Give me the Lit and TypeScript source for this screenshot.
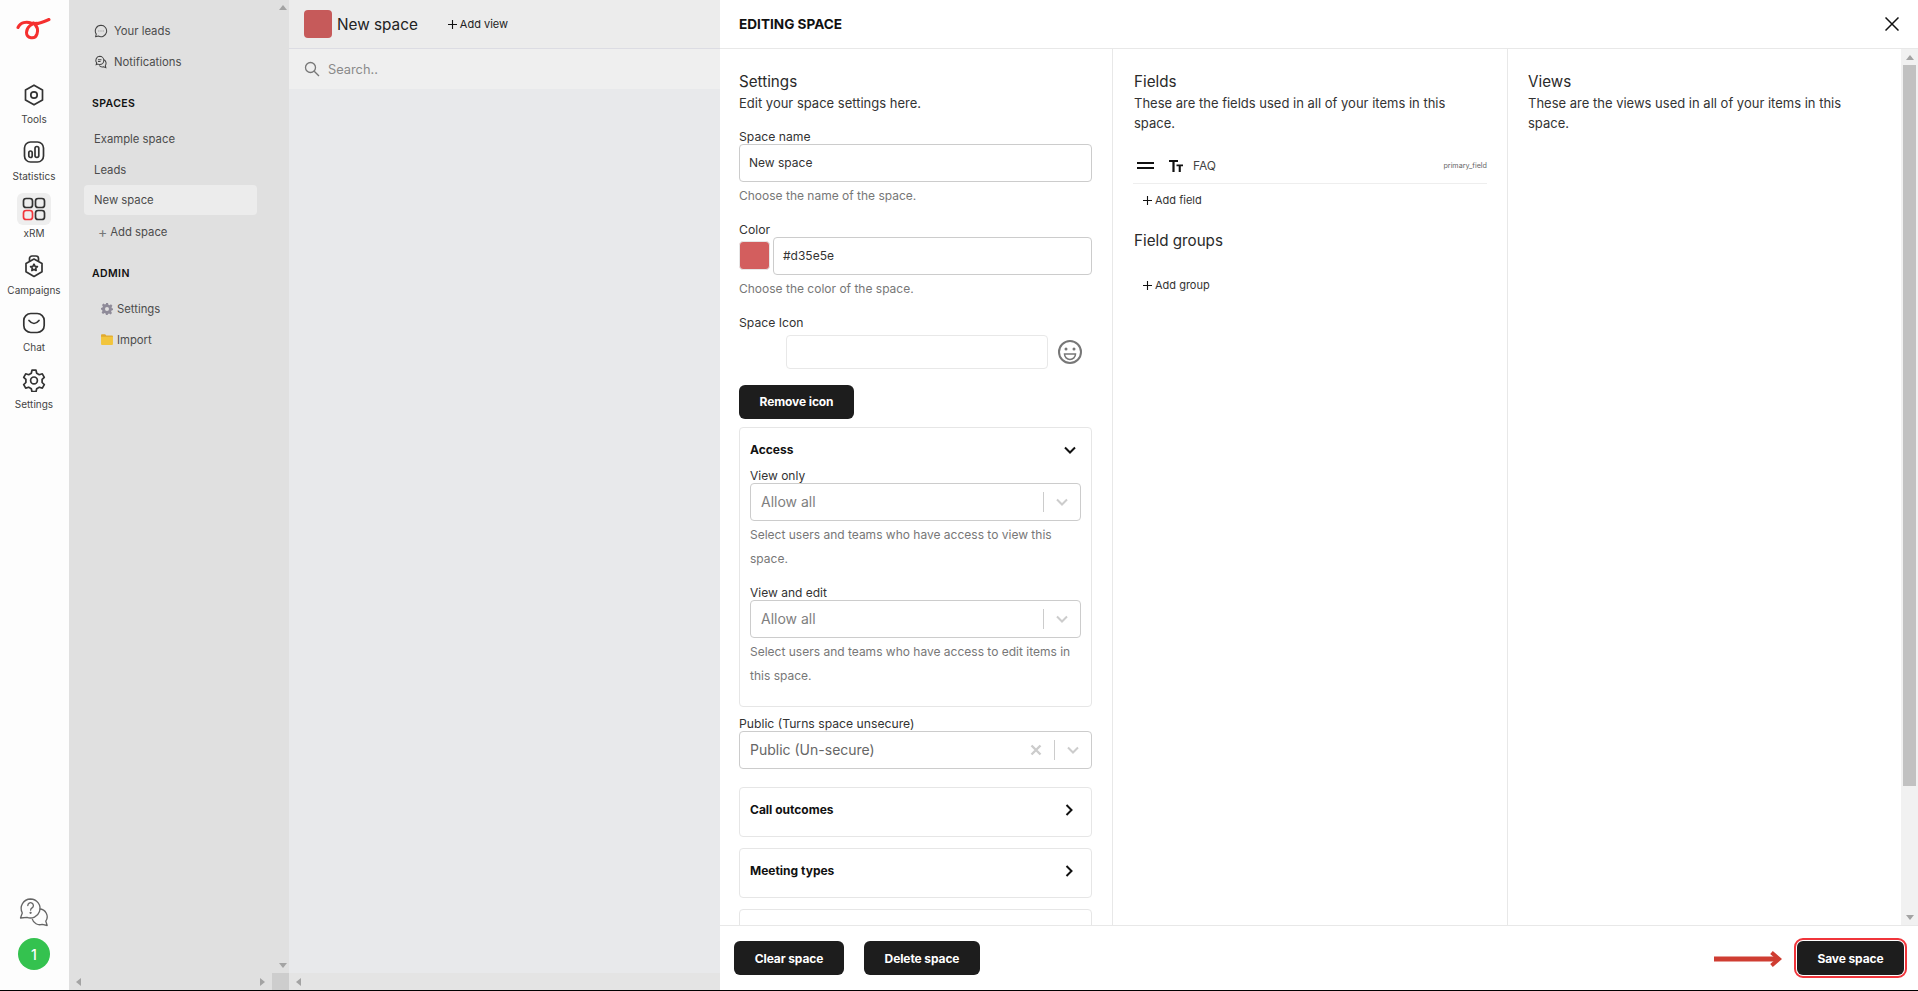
import {css, html, LitElement, svg} from 'lit'
import {customElement} from 'lit/decorators.js'

const chevronDown = html`<svg width="16" height="16" viewBox="0 0 16 16" fill="none" stroke="currentColor" stroke-width="2"><path d="M3 5.500l5 5 5-5"/></svg>`
const chevronRight = html`<svg width="16" height="16" viewBox="0 0 16 16" fill="none" stroke="#111" stroke-width="2"><path d="M5.500 3l5 5-5 5"/></svg>`
const plus = html`<svg class="plus-icon" width="9" height="9" viewBox="0 0 9 9" stroke="#111" stroke-width="1.100"><path d="M4.500 0v9M0 4.500h9"/></svg>`

const railIcons: Record<string, unknown> = {
    tools: svg`<path d="M12 2.200l8.500 4.900v9.800L12 21.800l-8.500-4.900V7.100z" stroke-linejoin="round"/><circle cx="12" cy="12" r="3.200"/>`,
    stats: svg`<rect x="2.500" y="2" width="19" height="20" rx="6"/><rect x="6.800" y="11" width="3.400" height="6.500" rx="1.700"/><rect x="13" y="6.500" width="3.800" height="11" rx="1.900"/>`,
    xrm: svg`<rect x="1.500" y="1.500" width="9" height="9" rx="2.600"/><rect x="13.500" y="1.500" width="9" height="9" rx="2.600"/><rect x="1.500" y="13.500" width="9" height="9" rx="2.600" stroke="#f0353b"/><rect x="13.500" y="13.500" width="9" height="9" rx="2.600"/>`,
    campaigns: svg`<path d="M12 5l8 4.400v8.400L12 22.400l-8-4.600V9.400z" stroke-linejoin="round"/><path d="M7.500 7V4.500a2.500 2.500 0 0 1 2.500-2.500h4a2.500 2.500 0 0 1 2.500 2.500V7"/><path d="M12 10.200l1.100 2.100 2.300.3-1.700 1.600.4 2.300-2.100-1.100-2.100 1.100.4-2.300-1.700-1.600 2.300-.3z" stroke-linejoin="round"/>`,
    chat: svg`<rect x="1.800" y="2.500" width="20.400" height="19" rx="7"/><path d="M7 9.500Q12 15.500 17 9.500" stroke-linecap="round"/>`,
    settings: svg`<path d="M10 2.200h4l.7 3 2.600 1.500 3-.9 2 3.500-2.200 2.100v3.100l2.200 2.100-2 3.500-3-.9-2.600 1.500-.7 3h-4l-.7-3-2.600-1.500-3 .9-2-3.500 2.200-2.100v-3.100L1.700 9.300l2-3.500 3 .9 2.600-1.500z" stroke-linejoin="round"/><circle cx="12" cy="12.400" r="3.400"/>`,
}

const railItems = [
    {key: 'tools', label: 'Tools'},
    {key: 'stats', label: 'Statistics'},
    {key: 'xrm', label: 'xRM', active: true},
    {key: 'campaigns', label: 'Campaigns'},
    {key: 'chat', label: 'Chat'},
    {key: 'settings', label: 'Settings'},
]

@customElement('app-root')
export class AppRoot extends LitElement {

    private select(value: string) {
        return html`
            <div class="select">
                <span class="select-value">${value}</span>
                <span class="select-sep"></span>
                <span class="select-arrow">${chevronDown}</span>
            </div>`
    }

    private renderRail() {
        return html`
            <nav class="rail">
                <div class="logo">
                    <svg width="36" height="26" viewBox="0 0 36 26" fill="none" stroke="#f5302f" stroke-width="3" stroke-linecap="round">
                        <path d="M2 10.500C4.500 5.500 10 4.500 15 6c6 1.500 11-.5 18-3.500"/>
                        <path d="M22 6.500C16 5.500 10.500 10 10.500 15.500c0 6 8.500 7.500 10.500 1.500 1.500-4.500-.5-8.500-3.500-11"/>
                    </svg>
                </div>
                ${railItems.map(item => html`
                    <div class="rail-item">
                        <span class="rail-icon ${item.active ? 'active' : ''}">
                            <svg width="24" height="24" viewBox="0 0 24 24" fill="none" stroke="#333" stroke-width="1.700">${railIcons[item.key]}</svg>
                        </span>
                        <span class="rail-label">${item.label}</span>
                    </div>`)}
                <div class="rail-spacer"></div>
                <svg class="help" width="30" height="30" viewBox="0 0 30 30" fill="none" stroke="#666" stroke-width="1.300">
                    <path d="M11.500 2a9.500 9.500 0 0 1 9 12.500 9.500 9.500 0 0 1-12.500 5.800L1.500 21l1.800-5A9.500 9.500 0 0 1 11.500 2z" stroke-linejoin="round"/>
                    <path d="M20.500 12a7.800 7.800 0 0 1 6.300 12.200l1.400 4.300-5-1.200a7.800 7.800 0 0 1-10-5.400" stroke-linejoin="round"/>
                    <path d="M8.800 8.500a2.800 2.800 0 1 1 4.300 2.400c-1 .7-1.500 1.200-1.500 2.300" stroke-linecap="round"/>
                    <circle cx="11.600" cy="15.800" r=".5"/>
                </svg>
                <div class="avatar">1</div>
            </nav>`
    }

    private renderSidebar() {
        return html`
            <aside class="sidebar">
                <div class="sidebar-inner">
                    <div class="side-scroll">
                        <div class="side-item">
                            <svg width="14" height="14" viewBox="0 0 16 16" fill="none" stroke="#444" stroke-width="1.200">
                                <path d="M8 1.500a6.500 6.500 0 1 1-3 12.300l-3.200.8.800-3A6.500 6.500 0 0 1 8 1.500z" stroke-linejoin="round"/>
                                <path d="M5.300 8h.6M7.700 8h.6M10.100 8h.6"/>
                            </svg>
                            Your leads
                        </div>
                        <div class="side-item">
                            <svg width="14" height="14" viewBox="0 0 16 16" fill="none" stroke="#444" stroke-width="1.200">
                                <path d="M6.500 1.500a4.700 4.700 0 0 1 0 9.400c-.7 0-1.400-.2-2-.5l-2 .6.500-2a4.700 4.700 0 0 1 3.500-7.500z"/>
                                <path d="M11.500 5.500a4.500 4.500 0 0 1 1.500 6.500l.5 2.500-2.500-1a4.500 4.500 0 0 1-5-1.500"/>
                                <path d="M4.500 5.500h4M4.500 7.500h3"/>
                            </svg>
                            Notifications
                        </div>
                        <div class="side-heading first">SPACES</div>
                        <div class="side-item plain">Example space</div>
                        <div class="side-item plain">Leads</div>
                        <div class="side-item plain active">New space</div>
                        <div class="side-item plain add"><span class="plus">+</span> Add space</div>
                        <div class="side-heading">ADMIN</div>
                        <div class="side-item admin">
                            <svg width="12" height="12" viewBox="0 0 24 24" fill="#8f8b99">
                                <path fill-rule="evenodd" d="M10 0h4l.8 3.400 2.200.9 3-1.800 2.800 2.800-1.800 3 .9 2.200L24.500 11v3l-3.400.8-.9 2.200 1.800 3-2.800 2.800-3-1.800-2.200.9L13 24.500h-3l-.8-3.400-2.200-.9-3 1.800-2.800-2.800 1.800-3-.9-2.200L-.5 13v-3l3.400-.8.9-2.200-1.800-3L4.800 1.200l3 1.800 2.200-.9zM12 8a4 4 0 1 0 0 8 4 4 0 0 0 0-8z"/>
                            </svg>
                            Settings
                        </div>
                        <div class="side-item admin">
                            <svg width="12" height="11" viewBox="0 0 13 12">
                                <path d="M0 1.500C0 .7.500.3 1.200.3h3.300l1.200 1.300H12c.6 0 1 .4 1 1v1H0z" fill="#e0a92e"/>
                                <path d="M0 3h13v8c0 .6-.4 1-1 1H1c-.6 0-1-.4-1-1z" fill="#f2c53d"/>
                            </svg>
                            Import
                        </div>
                    </div>
                    <div class="vbar">
                        <span class="arrow up"></span>
                        <span class="grow"></span>
                        <span class="arrow down"></span>
                    </div>
                </div>
                <div class="hbar">
                    <span class="arrow left"></span>
                    <span class="grow"></span>
                    <span class="arrow right"></span>
                    <span class="corner"></span>
                </div>
            </aside>`
    }

    private renderMain() {
        return html`
            <main class="main">
                <div class="topbar">
                    <span class="space-swatch"></span>
                    <span class="space-name">New space</span>
                    <span class="add-view">${plus} Add view</span>
                </div>
                <div class="searchbar">
                    <svg width="16" height="16" viewBox="0 0 16 16" fill="none" stroke="#777" stroke-width="1.300">
                        <circle cx="6.500" cy="6.500" r="5"/><path d="M10.200 10.200L15 15"/>
                    </svg>
                    <span>Search..</span>
                </div>
                <div class="grow"></div>
                <div class="hbar main-hbar"><span class="arrow left"></span></div>
            </main>`
    }

    private renderSettings() {
        return html`
            <section class="col col-settings">
                <h2>Settings</h2>
                <p class="sub">Edit your space settings here.</p>
                <div class="label name-label">Space name</div>
                <div class="input">New space</div>
                <div class="help-text">Choose the name of the space.</div>

                <div class="label spaced">Color</div>
                <div class="color-row">
                    <span class="color-swatch"></span>
                    <div class="input grow">#d35e5e</div>
                </div>
                <div class="help-text">Choose the color of the space.</div>

                <div class="label spaced icon-label">Space Icon</div>
                <div class="icon-row">
                    <div class="icon-input"></div>
                    <svg width="26" height="26" viewBox="0 0 26 26" fill="none" stroke="#777" stroke-width="2">
                        <circle cx="13" cy="13" r="11"/>
                        <circle cx="9" cy="10" r="1.500" fill="#777" stroke="none"/>
                        <circle cx="17" cy="10" r="1.500" fill="#777" stroke="none"/>
                        <path d="M7.500 15h11a5.500 5.500 0 0 1-11 0z" stroke-width="1.500"/>
                    </svg>
                </div>
                <button class="btn remove">Remove icon</button>

                <div class="card access">
                    <div class="card-head"><span>Access</span><span class="chev">${chevronDown}</span></div>
                    <div class="label first">View only</div>
                    ${this.select('Allow all')}
                    <div class="help-text tall">Select users and teams who have access to view this space.</div>
                    <div class="label second">View and edit</div>
                    ${this.select('Allow all')}
                    <div class="help-text tall">Select users and teams who have access to edit items in this space.</div>
                </div>

                <div class="label public">Public (Turns space unsecure)</div>
                <div class="select public-select">
                    <span class="select-value dark">Public (Un-secure)</span>
                    <svg class="clear" width="12" height="12" viewBox="0 0 12 12" stroke="#ccc" stroke-width="2.400"><path d="M1.500 1.500l9 9M10.500 1.500l-9 9"/></svg>
                    <span class="select-sep"></span>
                    <span class="select-arrow">${chevronDown}</span>
                </div>

                <div class="card closed outcomes"><span>Call outcomes</span>${chevronRight}</div>
                <div class="card closed"><span>Meeting types</span>${chevronRight}</div>
                <div class="card closed"></div>
            </section>`
    }

    private renderFields() {
        return html`
            <section class="col col-fields">
                <h2>Fields</h2>
                <p class="sub">These are the fields used in all of your items in this space.</p>
                <div class="field-row">
                    <svg class="drag" width="17" height="8" viewBox="0 0 17 8" fill="#111"><rect width="17" height="2"/><rect y="5" width="17" height="2"/></svg>
                    <svg class="tt" width="14" height="12" viewBox="0 0 14 12" fill="#111"><path d="M0 0h9v2H5.600v10H3.400V2H0z"/><path d="M7.500 4.500H14v1.700h-2.200V12H9.700V6.200H7.500z"/></svg>
                    <span class="field-name">FAQ</span>
                    <span class="field-key">primary_field</span>
                </div>
                <div class="add-link">${plus} Add field</div>
                <h2 class="groups">Field groups</h2>
                <div class="add-link add-group">${plus} Add group</div>
            </section>`
    }

    render() {
        return html`
            <div class="page">
                ${this.renderRail()}
                ${this.renderSidebar()}
                ${this.renderMain()}
                <div class="panel">
                    <header class="panel-head">
                        <span class="panel-title">EDITING SPACE</span>
                        <svg width="14" height="14" viewBox="0 0 14 14" stroke="#111" stroke-width="1.500"><path d="M.5.500l13 13M13.500.500l-13 13"/></svg>
                    </header>
                    <div class="panel-body">
                        ${this.renderSettings()}
                        ${this.renderFields()}
                        <section class="col col-views">
                            <h2>Views</h2>
                            <p class="sub">These are the views used in all of your items in this space.</p>
                        </section>
                        <div class="vbar panel-vbar">
                            <span class="arrow up"></span>
                            <span class="thumb"></span>
                            <span class="grow"></span>
                            <span class="arrow down"></span>
                        </div>
                    </div>
                    <footer class="panel-foot">
                        <button class="btn clear-btn">Clear space</button>
                        <button class="btn delete-btn">Delete space</button>
                        <span class="grow"></span>
                        <svg class="red-arrow" width="68" height="16" viewBox="0 0 68 16" fill="none" stroke="#cf3d32">
                            <path d="M0 8h63" stroke-width="5"/><path d="M57.500 1.500L65 8l-7.500 6.500" stroke-width="4"/>
                        </svg>
                        <button class="btn save">Save space</button>
                    </footer>
                </div>
            </div>
        `
    }

    static styles = css`
      :host {
        display: block;
        font-family: Inter, 'Noto Sans', sans-serif;
        color: #333;
      }

      * {
        box-sizing: border-box;
      }

      .page {
        display: flex;
        width: 1918px;
        height: 991px;
        border-bottom: 1px solid #000;
        overflow: hidden;
      }

      .grow {
        flex: 1;
      }

      /* icon rail */
      .rail {
        width: 69px;
        flex: none;
        background: #fdfdfd;
        display: flex;
        flex-direction: column;
        align-items: center;
        padding-right: 1px;
      }

      .logo {
        height: 66px;
        padding-top: 17px;
      }

      .rail-item {
        height: 57px;
        flex: none;
        display: flex;
        flex-direction: column;
        align-items: center;
        padding-top: 16.500px;
      }

      .rail-icon {
        width: 34px;
        height: 32px;
        flex: none;
        margin-top: -4px;
        display: flex;
        align-items: center;
        justify-content: center;
        border-radius: 6px;
      }

      .rail-icon.active {
        background: #eeeeee;
      }

      .rail-label {
        font-size: 10px;
        line-height: 13px;
        flex: none;
        margin-top: 2px;
        color: #444;
      }

      .rail-spacer {
        flex: 1;
      }

      .help {
        margin-bottom: 11px;
      }

      .avatar {
        width: 32px;
        height: 32px;
        border-radius: 50%;
        background: #34c24f;
        color: #fff;
        font-size: 14px;
        font-weight: 500;
        display: flex;
        align-items: center;
        justify-content: center;
        margin-bottom: 20px;
      }

      /* sidebar */
      .sidebar {
        width: 220px;
        flex: none;
        background: #e0e0e0;
        display: flex;
        flex-direction: column;
      }

      .sidebar-inner {
        flex: 1;
        display: flex;
        min-height: 0;
      }

      .side-scroll {
        flex: 1;
        padding: 15px 20px 0 15px;
      }

      .side-item {
        height: 31px;
        display: flex;
        align-items: center;
        gap: 6px;
        padding-left: 10px;
        font-size: 11.300px;
        color: #4c4c4c;
        border-radius: 4px;
      }

      .side-item.active {
        background: #ececec;
        height: 30px;
        margin-bottom: 1px;
      }

      .side-item.add {
        padding-left: 14px;
        gap: 3px;
      }

      .side-item.admin {
        padding-left: 17px;
        gap: 4px;
      }

      .plus {
        color: #777;
        font-size: 14px;
        line-height: 14px;
      }

      .side-heading {
        font-size: 10.500px;
        font-weight: 600;
        letter-spacing: .4px;
        color: #111;
        height: 31px;
        padding: 0 0 0 8px;
        margin-top: 11px;
        display: flex;
        align-items: center;
      }

      .side-heading.first {
        margin-bottom: 4px;
      }

      .side-heading + .side-item.admin {
        margin-top: 4px;
      }

      /* scrollbars */
      .vbar {
        width: 12px;
        flex: none;
        display: flex;
        flex-direction: column;
        align-items: center;
        padding: 5px 0;
      }

      .hbar {
        height: 17px;
        flex: none;
        display: flex;
        align-items: center;
        padding-left: 7px;
      }

      .hbar .arrow.right {
        margin-right: 7px;
      }

      .corner {
        width: 17px;
        height: 17px;
        background: #cdcdcd;
      }

      .arrow {
        width: 0;
        height: 0;
        border: 4px solid transparent;
        flex: none;
      }

      .arrow.up {
        border-top: 0;
        border-bottom: 5px solid #a3a3a3;
      }

      .arrow.down {
        border-bottom: 0;
        border-top: 5px solid #a3a3a3;
      }

      .arrow.left {
        border-left: 0;
        border-right: 5px solid #a3a3a3;
      }

      .arrow.right {
        border-right: 0;
        border-left: 5px solid #a3a3a3;
      }

      /* dimmed main area */
      .main {
        width: 431px;
        flex: none;
        background: #e8e9eb;
        display: flex;
        flex-direction: column;
      }

      .topbar {
        height: 49px;
        background: #ececec;
        border-bottom: 1px solid #dcdce3;
        display: flex;
        align-items: center;
        padding-left: 15px;
      }

      .space-swatch {
        width: 28px;
        height: 28px;
        border-radius: 4px;
        background: #c65a5a;
      }

      .space-name {
        font-size: 15.300px;
        color: #222;
        margin-left: 5px;
      }

      .add-view {
        font-size: 11px;
        color: #222;
        margin-left: 30px;
        display: flex;
        align-items: center;
        gap: 3px;
      }

      .searchbar {
        height: 40px;
        background: #efefef;
        display: flex;
        align-items: center;
        gap: 8px;
        padding-left: 15px;
        font-size: 12.800px;
        color: #8a8a8a;
      }

      .main-hbar {
        background: #e4e4e4;
      }

      /* editing panel */
      .panel {
        flex: 1;
        min-width: 0;
        background: #fff;
        display: flex;
        flex-direction: column;
      }

      .panel-head {
        height: 49px;
        flex: none;
        border-bottom: 1px solid #e8e8e8;
        display: flex;
        align-items: center;
        justify-content: space-between;
        padding: 0 19px;
      }

      .panel-title {
        font-size: 13.600px;
        font-weight: 700;
        color: #111;
      }

      .panel-body {
        flex: 1;
        min-height: 0;
        display: flex;
      }

      .col {
        flex: none;
        overflow: hidden;
      }

      .col-settings {
        width: 393px;
        padding: 23px 20px 0 19px;
        border-right: 1px solid #e8e8e8;
      }

      .col-fields {
        width: 395px;
        padding: 23px 20px 0 21px;
        border-right: 1px solid #e8e8e8;
      }

      .col-views {
        flex: 1;
        padding: 23px 20px 0 20px;
      }

      h2 {
        margin: 0;
        font-size: 15.200px;
        font-weight: 400;
        line-height: 20px;
        color: #2a2a2a;
      }

      .sub {
        margin: 1px 0 0;
        font-size: 13px;
        line-height: 20px;
        color: #333;
      }

      .label {
        font-size: 12.200px;
        line-height: 14px;
        color: #333;
        margin-top: 14px;
      }

      .label.name-label {
        margin: 16.500px 0 0;
      }

      .label.spaced {
        margin-top: 20px;
      }

      .label.icon-label {
        margin-top: 20px;
      }

      .input {
        height: 38px;
        border: 1px solid #ccc;
        border-radius: 4px;
        font-size: 12px;
        color: #333;
        padding: 0 9px;
        display: flex;
        align-items: center;
      }

      .help-text {
        font-size: 12px;
        line-height: 14px;
        color: #777;
        margin-top: 7px;
      }

      .help-text.tall {
        line-height: 24px;
        margin-top: 2px;
      }

      .color-row {
        display: flex;
        align-items: center;
        gap: 3px;
        margin-bottom: 1px;
      }

      .color-swatch {
        width: 31px;
        height: 29px;
        border-radius: 4px;
        background: #d35e5e;
        border: 1px solid #e6e6e6;
      }

      .icon-row {
        display: flex;
        align-items: center;
        padding-left: 47px;
        gap: 9px;
        margin-top: 5px;
      }

      .icon-input {
        width: 262px;
        height: 34px;
        border: 1px solid #e8e8e8;
        border-radius: 4px;
      }

      .btn {
        font-family: inherit;
        font-size: 12px;
        font-weight: 700;
        letter-spacing: -.1px;
        color: #fff;
        background: #1d1d1d;
        border: 0;
        border-radius: 6px;
        height: 34px;
        padding: 0;
      }

      .btn.remove {
        display: block;
        width: 115px;
        margin-top: 16px;
      }

      .card {
        border: 1px solid #e6e6e6;
        border-radius: 4px;
        padding: 0 10px;
        font-size: 12px;
        font-weight: 700;
        color: #111;
      }

      .access {
        margin-top: 8px;
        height: 280px;
      }

      .card-head {
        display: flex;
        justify-content: space-between;
        align-items: center;
        height: 36px;
        padding-right: 3px;
        padding-top: 8px;
      }

      .chev {
        color: #111;
        display: flex;
      }

      .access .label,
      .access .help-text {
        font-weight: 400;
      }

      .access .label {
        font-size: 12px;
      }

      .access .label.first {
        margin-top: 5px;
      }

      .access .label.second {
        margin-top: 15px;
      }

      .select {
        height: 38px;
        border: 1px solid #ccc;
        border-radius: 4px;
        display: flex;
        align-items: center;
        padding-left: 10px;
        font-weight: 400;
      }

      .select-value {
        flex: 1;
        font-size: 14px;
        color: #808080;
      }

      .select-value.dark {
        color: #666;
      }

      .select-sep {
        width: 1px;
        height: 20px;
        background: #ccc;
      }

      .select-arrow {
        color: #ccc;
        width: 36px;
        display: flex;
        justify-content: center;
      }

      .label.public {
        margin: 10px 0 0;
      }

      .clear {
        margin-right: 12px;
      }

      .closed {
        height: 50px;
        margin-top: 11px;
        display: flex;
        align-items: flex-start;
        justify-content: space-between;
        padding: 14px 14px 0 10px;
      }

      .closed.outcomes {
        margin-top: 18px;
      }

      .field-row {
        height: 38px;
        margin: 13px 0 0 -1px;
        border-bottom: 1px solid #eee;
        display: flex;
        align-items: center;
        padding: 2px 0 0 4px;
        font-size: 12px;
      }

      .tt {
        margin-left: 15px;
      }

      .field-name {
        margin-left: 10px;
        color: #444;
      }

      .field-key {
        margin-left: auto;
        font-size: 7.200px;
        color: #666;
      }

      .add-link {
        font-size: 11px;
        color: #333;
        padding-left: 9px;
        display: flex;
        align-items: center;
        gap: 3px;
        margin-top: 9px;
        height: 14px;
      }

      h2.groups {
        margin-top: 24px;
      }

      .add-link.add-group {
        margin-top: 27px;
      }

      .panel-vbar {
        width: 17px;
        background: #f1f1f1;
        margin-left: auto;
        padding: 6px 0 5px;
      }

      .thumb {
        width: 13px;
        height: 721px;
        background: #c1c1c1;
        margin-top: 5px;
      }

      .panel-foot {
        height: 65px;
        flex: none;
        border-top: 1px solid #e8e8e8;
        display: flex;
        align-items: center;
        padding: 0 14px;
      }

      .clear-btn {
        width: 110px;
      }

      .delete-btn {
        width: 116px;
        margin-left: 20px;
      }

      .red-arrow {
        margin: 2px 15px 0 0;
      }

      .save {
        width: 107px;
        outline: 2px solid #f0353b;
        outline-offset: 1px;
      }
    `
}

declare global {
    interface HTMLElementTagNameMap {
        'app-root': AppRoot
    }
}
